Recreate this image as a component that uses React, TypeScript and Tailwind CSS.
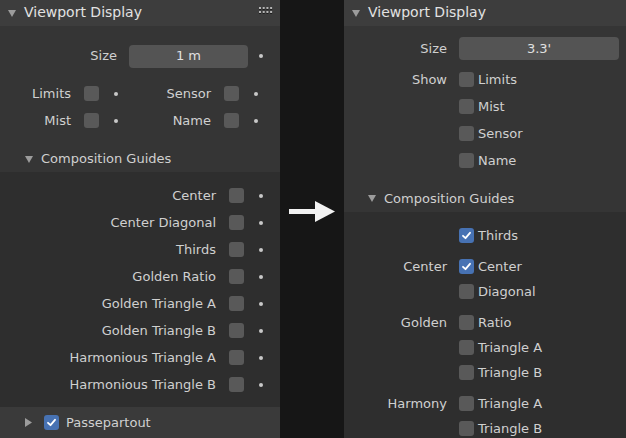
const font = "font-['DejaVu_Sans',sans-serif]";

function TriDown() {
  return (
    <svg width="8" height="7" viewBox="0 0 8 7" className="shrink-0">
      <polygon points="0,0 8,0 4,7" fill="#9c9c9c" />
    </svg>
  );
}

function TriRight() {
  return (
    <svg width="7" height="9" viewBox="0 0 7 9" className="shrink-0">
      <polygon points="0,0 7,4.5 0,9" fill="#9c9c9c" />
    </svg>
  );
}

function Grip() {
  return (
    <svg width="14" height="8" viewBox="0 0 14 8">
      {[0, 1].map((r) =>
        [0, 1, 2, 3].map((c) => (
          <g key={`${r}-${c}`}>
            <rect x={c * 3.7} y={r * 4 + 1} width="2" height="2" fill="#1e1e1e" />
            <rect x={c * 3.7} y={r * 4} width="2" height="2" fill="#b4b4b4" />
          </g>
        ))
      )}
    </svg>
  );
}

function Dot() {
  return <div className="h-[4px] w-[4px] shrink-0 rounded-full bg-[#c8c8c8]" />;
}

function Check({ on = false }: { on?: boolean }) {
  return (
    <div
      className={
        on
          ? "flex h-[15px] w-[15px] shrink-0 items-center justify-center rounded-[3px] bg-[#4772b3]"
          : "h-[15px] w-[15px] shrink-0 rounded-[3px] bg-[#595959]"
      }
    >
      {on && (
        <svg width="11" height="11" viewBox="0 0 11 11">
          <path d="M2 5.8 L4.5 8.2 L9 2.8" fill="none" stroke="#ffffff" strokeWidth="1.8" strokeLinecap="round" strokeLinejoin="round" />
        </svg>
      )}
    </div>
  );
}

function PanelHeader({ grip = false }: { grip?: boolean }) {
  return (
    <div className="flex h-[26px] shrink-0 items-center bg-[#3d3d3d] pl-[8px] pr-[7px]">
      <TriDown />
      <span className="ml-[8px] -mt-[1px] text-[14px] text-[#e2e2e2]">Viewport Display</span>
      {grip && (
        <div className="ml-auto -mt-[4px]">
          <Grip />
        </div>
      )}
    </div>
  );
}

function PairItem({ label }: { label: string }) {
  return (
    <div className="flex w-[145px] items-center">
      <span className="w-[71px] text-right">{label}</span>
      <div className="ml-[13px]">
        <Check />
      </div>
      <div className="ml-[15px]">
        <Dot />
      </div>
    </div>
  );
}

const guides = [
  "Center",
  "Center Diagonal",
  "Thirds",
  "Golden Ratio",
  "Golden Triangle A",
  "Golden Triangle B",
  "Harmonious Triangle A",
  "Harmonious Triangle B",
];

function LeftPanel() {
  return (
    <div className="flex h-[438px] w-[280px] shrink-0 flex-col overflow-hidden bg-[#353535] text-[13px] text-[#d0d0d0]">
      <PanelHeader grip />
      <div className="mt-[18px] flex h-[24px] shrink-0 items-center">
        <span className="w-[117px] text-right">Size</span>
        <div className="ml-[12px] flex h-[23px] w-[119px] items-center justify-center rounded-[4px] bg-[#545454] text-[#e0e0e0]">
          1 m
        </div>
        <div className="ml-[11px]">
          <Dot />
        </div>
      </div>
      <div className="mt-[12px] shrink-0">
        <div className="flex h-[27px] items-center">
          <PairItem label="Limits" />
          <PairItem label="Sensor" />
        </div>
        <div className="flex h-[27px] items-center">
          <PairItem label="Mist" />
          <PairItem label="Name" />
        </div>
      </div>
      <div className="mt-[12px] flex h-[26px] shrink-0 items-center pl-[25px]">
        <TriDown />
        <span className="ml-[8px]">Composition Guides</span>
      </div>
      <div className="h-[235px] shrink-0 bg-[#2e2e2e] pt-[10px]">
        {guides.map((g) => (
          <div key={g} className="flex h-[27px] items-center">
            <span className="w-[216px] text-right">{g}</span>
            <div className="ml-[13px]">
              <Check />
            </div>
            <div className="ml-[15px]">
              <Dot />
            </div>
          </div>
        ))}
      </div>
      <div className="flex flex-1 items-center bg-[#3a3a3a] pl-[25px]">
        <TriRight />
        <div className="ml-[12px]">
          <Check on />
        </div>
        <span className="ml-[7px]">Passepartout</span>
      </div>
    </div>
  );
}

function RightRow({ label, text, on = false, h = "h-[27px]" }: { label?: string; text: string; on?: boolean; h?: string }) {
  return (
    <div className={`flex items-center ${h}`}>
      <span className="w-[103px] text-right">{label}</span>
      <div className="ml-[12px]">
        <Check on={on} />
      </div>
      <span className="ml-[4px]">{text}</span>
    </div>
  );
}

function RightPanel() {
  return (
    <div className="flex h-[438px] w-[282px] shrink-0 flex-col overflow-hidden bg-[#353535] text-[13px] text-[#d0d0d0]">
      <PanelHeader />
      <div className="mt-[11px] flex h-[23px] shrink-0 items-center">
        <span className="w-[103px] text-right">Size</span>
        <div className="ml-[12px] flex h-[23px] w-[160px] items-center justify-center rounded-[4px] bg-[#545454] text-[#e0e0e0]">
          3.3'
        </div>
      </div>
      <div className="mt-[6px] shrink-0">
        <RightRow label="Show" text="Limits" />
        <RightRow text="Mist" />
        <RightRow text="Sensor" />
        <RightRow text="Name" />
      </div>
      <div className="mt-[11px] flex h-[27px] shrink-0 items-center pl-[24px]">
        <TriDown />
        <span className="ml-[8px]">Composition Guides</span>
      </div>
      <div className="shrink-0 grow bg-[#2e2e2e] pt-[11px]">
        <RightRow text="Thirds" on h="h-[25px]" />
        <div className="mt-[6px]">
          <RightRow label="Center" text="Center" on h="h-[25px]" />
          <RightRow text="Diagonal" h="h-[25px]" />
        </div>
        <div className="mt-[6px]">
          <RightRow label="Golden" text="Ratio" h="h-[25px]" />
          <RightRow text="Triangle A" h="h-[25px]" />
          <RightRow text="Triangle B" h="h-[25px]" />
        </div>
        <div className="mt-[6px]">
          <RightRow label="Harmony" text="Triangle A" h="h-[25px]" />
          <RightRow text="Triangle B" h="h-[25px]" />
        </div>
      </div>
    </div>
  );
}

export default function App() {
  return (
    <div className={`flex h-[438px] w-[626px] overflow-hidden bg-[#161616] ${font}`}>
      <LeftPanel />
      <div className="w-[64px] shrink-0 pl-[9px] pt-[201px]">
        <svg width="46" height="21" viewBox="0 0 46 21">
          <rect x="0" y="8" width="28" height="5" fill="#f2f2f2" />
          <polygon points="26,0 46,10.5 26,21" fill="#f2f2f2" />
        </svg>
      </div>
      <RightPanel />
    </div>
  );
}
